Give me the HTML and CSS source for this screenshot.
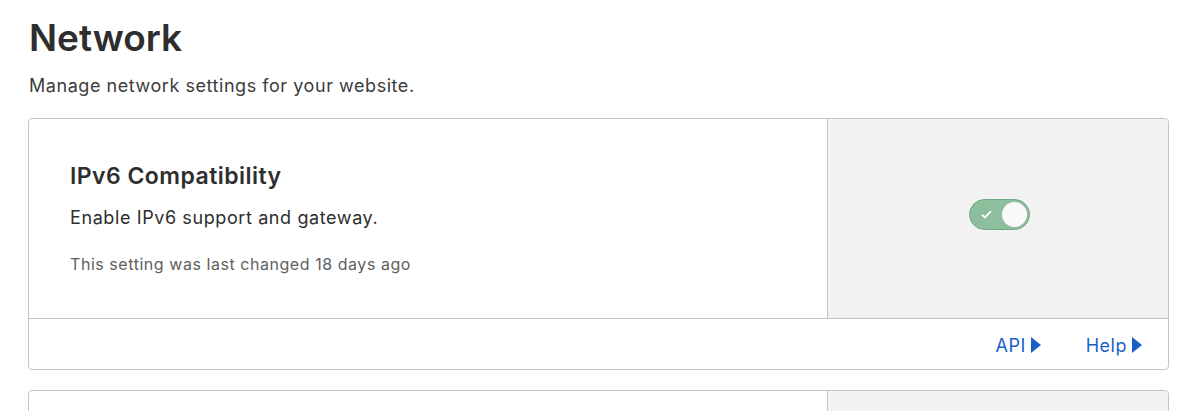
FILE: index.html
```html
<!DOCTYPE html>
<html lang="en">
<head>
	<meta charset="UTF-8">
	<title>Network</title>
	<link rel="stylesheet" href="styles.css">
</head>
<body>
	<div class="page">
		<h1 class="page-title">Network</h1>
		<p class="page-desc">Manage network settings for your website.</p>

		<div class="card">
			<div class="card-main">
				<div class="card-body">
					<h3 class="card-title">IPv6 Compatibility</h3>
					<p class="card-text">Enable IPv6 support and gateway.</p>
					<p class="card-meta">This setting was last changed 18 days ago</p>
				</div>
				<div class="card-control">
					<label class="toggle">
						<span class="toggle-check">
							<svg width="11" height="9" viewBox="0 0 11 9"><path d="M1 4.6 L4 7.4 L10 1.2" fill="none" stroke="#fff" stroke-width="1.8"/></svg>
						</span>
						<span class="toggle-knob"></span>
					</label>
				</div>
			</div>
			<div class="card-footer">
				<a class="link" href="#">API<span class="caret"></span></a>
				<a class="link" href="#">Help<span class="caret"></span></a>
			</div>
		</div>

		<div class="card">
			<div class="card-main">
				<div class="card-body"></div>
				<div class="card-control"></div>
			</div>
		</div>
	</div>
</body>
</html>
```

FILE: styles.css
```css
*{
	box-sizing: border-box;
	margin: 0;
	padding: 0;
}
body{
	font-family: Inter, 'Liberation Sans', Arial, sans-serif;
	color: #333;
	background: #fff;
}
.page{
	width: 1141px;
	margin-left: 28px;
	padding-top: 16px;
}
.page-title{
	font-size: 37px;
	line-height: 44px;
	font-weight: 600;
	color: #2e2e2e;
	padding-left: 1px;
}
.page-desc{
	font-size: 18px;
	line-height: 24px;
	letter-spacing: 0.55px;
	margin-top: 14px;
	color: #3c3c3c;
	padding-left: 1px;
}
.card{
	border: 1px solid #c4c4c4;
	border-radius: 4px;
	margin-top: 20px;
	overflow: hidden;
}
.card-main{
	display: flex;
	height: 199px;
}
.card-body{
	flex: 1;
	padding: 43px 41px 0;
}
.card-title{
	font-size: 23px;
	line-height: 28px;
	letter-spacing: 0.45px;
	font-weight: 600;
	color: #2e2e2e;
}
.card-text{
	font-size: 18px;
	line-height: 22px;
	letter-spacing: 0.6px;
	margin-top: 17px;
	color: #2e2e2e;
}
.card-meta{
	font-size: 16px;
	line-height: 20px;
	letter-spacing: 0.55px;
	margin-top: 25px;
	color: #606060;
}
.card-control{
	width: 341px;
	background: #f2f2f2;
	border-left: 1px solid #c4c4c4;
	display: flex;
	align-items: center;
	justify-content: center;
	padding-bottom: 8px;
	padding-left: 2px;
}
.toggle{
	position: relative;
	display: block;
	width: 61px;
	height: 31px;
	border-radius: 16px;
	background: #8dbf9c;
	border: 1px solid #72a784;
}
.toggle-check{
	position: absolute;
	left: 11px;
	top: 10px;
	line-height: 0;
}
.toggle-knob{
	position: absolute;
	right: 2px;
	top: 2px;
	width: 25px;
	height: 25px;
	border-radius: 50%;
	background: #fafafa;
	box-shadow: 0 0 0 1px #9bb8a4;
}
.card-footer{
	border-top: 1px solid #c4c4c4;
	height: 51px;
	display: flex;
	align-items: center;
	justify-content: flex-end;
	gap: 45px;
	padding-top: 2px;
	padding-right: 26px;
}
.link{
	font-size: 18px;
	letter-spacing: 0.5px;
	color: #1a5fc8;
	text-decoration: none;
	display: flex;
	align-items: center;
}
.caret{
	display: inline-block;
	width: 0;
	height: 0;
	margin-left: 5px;
	border-top: 8px solid transparent;
	border-bottom: 8px solid transparent;
	border-left: 10px solid #1a5fc8;
}
```
